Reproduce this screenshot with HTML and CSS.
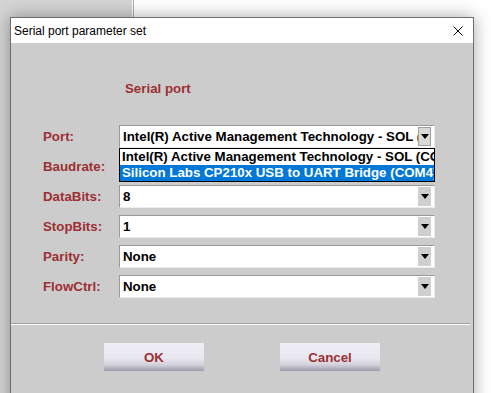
FILE: index.html
```html
<!DOCTYPE html>
<html lang="en">
<head>
    <meta charset="UTF-8">
    <meta name="viewport" content="width=device-width, initial-scale=1.0">
    <title>Serial port parameter set</title>
    <link rel="stylesheet" href="styles.css">
</head>
<body>
    <div class="desktop">
        <!-- window behind the dialog -->
        <div class="side-panel"></div>

        <!-- Dialog -->
        <div class="window">
            <div class="titlebar">
                <span class="title">Serial port parameter set</span>
                <svg class="close" width="10" height="10" viewBox="0 0 10 10">
                    <path d="M0.5 0.5 L9.5 9.5 M9.5 0.5 L0.5 9.5" stroke="#000" stroke-width="1" fill="none"/>
                </svg>
            </div>
            <div class="window-body">
                <h2 class="section-title">Serial port</h2>
                <div class="form">
                    <div class="row">
                        <label>Port:</label>
                        <div class="combo open">
                            <span class="value">Intel(R) Active Management Technology - SOL (COM3)</span>
                            <span class="arrow"></span>
                            <ul class="combo-list">
                                <li>Intel(R) Active Management Technology - SOL (COM3)</li>
                                <li class="selected">Silicon Labs CP210x USB to UART Bridge (COM4)</li>
                            </ul>
                        </div>
                    </div>
                    <div class="row">
                        <label>Baudrate:</label>
                        <!-- covered by the open port list -->
                        <div class="combo"><span class="value"></span><span class="arrow"></span></div>
                    </div>
                    <div class="row">
                        <label>DataBits:</label>
                        <div class="combo"><span class="value">8</span><span class="arrow"></span></div>
                    </div>
                    <div class="row">
                        <label>StopBits:</label>
                        <div class="combo"><span class="value">1</span><span class="arrow"></span></div>
                    </div>
                    <div class="row">
                        <label>Parity:</label>
                        <div class="combo"><span class="value">None</span><span class="arrow"></span></div>
                    </div>
                    <div class="row">
                        <label>FlowCtrl:</label>
                        <div class="combo"><span class="value">None</span><span class="arrow"></span></div>
                    </div>
                </div>
                <div class="separator"></div>
                <div class="buttons">
                    <button>OK</button>
                    <button>Cancel</button>
                </div>
            </div>
        </div>
    </div>
</body>
</html>
```

FILE: styles.css
```css
body {
    margin: 0;
    padding: 0;
    font-family: "Liberation Sans", Arial, sans-serif;
    background-color: #fff;
}
.desktop {
    position: relative;
    height: 100vh;
    overflow: hidden;
}
.side-panel {
    width: 132px;
    height: 100%;
    background-color: #d4d4d4;
    border-right: 1px solid #fff;
    box-shadow: 1px 0 0 #a9a9a9;
}
.window {
    position: absolute;
    left: 10px;
    top: 17px;
    width: 464px;
    height: 400px;
    box-sizing: border-box;
    border: 1px solid #6f6f6f;
    background-color: #cccccc;
    box-shadow: 0 0 16px rgba(0, 0, 0, 0.35);
}
.titlebar {
    height: 25px;
    background-color: #fff;
    display: flex;
    align-items: center;
    justify-content: space-between;
    padding: 0 10px 0 3px;
}
.title {
    font-size: 12px;
    color: #000;
}
.section-title {
    margin: 38px 0 0 114px;
    font-size: 13.3px;
    line-height: 16px;
    color: #9c2f33;
}
.form {
    margin-top: 28px;
    padding-left: 32px;
    display: flex;
    flex-direction: column;
    gap: 7px;
}
.row {
    display: flex;
    align-items: center;
    height: 23px;
}
.row label {
    width: 76px;
    font-size: 13.3px;
    font-weight: bold;
    color: #9c2f33;
}
.combo {
    position: relative;
    width: 316px;
    height: 23px;
    box-sizing: border-box;
    border: 1px solid;
    border-color: #9a9a9a #ececec #ececec #9a9a9a;
    background-color: #fff;
    display: flex;
    align-items: center;
    padding: 0 3px 0 3px;
}
.value {
    flex: 1;
    font-size: 13.3px;
    font-weight: bold;
    color: #000;
    white-space: nowrap;
    overflow: hidden;
}
.arrow {
    width: 13px;
    height: 19px;
    box-sizing: border-box;
    background-color: #cfcfcf;
    display: flex;
    align-items: center;
    justify-content: center;
}
.arrow::after {
    content: "";
    border-left: 4px solid transparent;
    border-right: 4px solid transparent;
    border-top: 5px solid #000;
}
.combo.open .arrow {
    border: 1px solid #9f9f9f;
    background-color: #d9d9d9;
}
.combo-list {
    position: absolute;
    left: -1px;
    top: 22px;
    width: 316px;
    box-sizing: border-box;
    margin: 0;
    padding: 0;
    list-style: none;
    border: 1px solid #000;
    background-color: #fff;
    z-index: 2;
}
.combo-list li {
    height: 16px;
    line-height: 16px;
    padding-left: 2px;
    font-size: 13.3px;
    font-weight: bold;
    color: #000;
    white-space: nowrap;
    overflow: hidden;
}
.combo-list li.selected {
    background-color: #0078d7;
    color: #fff;
}
.separator {
    margin: 25px 3px 0 0;
    border-top: 1px solid #a0a0a0;
    border-bottom: 1px solid #fff;
}
.buttons {
    margin-top: 18px;
    display: flex;
    justify-content: center;
    gap: 76px;
}
button {
    width: 100px;
    height: 28px;
    border: none;
    padding: 0;
    font-family: "Liberation Sans", Arial, sans-serif;
    font-size: 13.3px;
    font-weight: bold;
    color: #9c2f33;
    background: linear-gradient(#efeef7 0%, #e8e7f0 55%, #d2d0da 78%, #9d9ba9 100%);
    cursor: pointer;
}
```
